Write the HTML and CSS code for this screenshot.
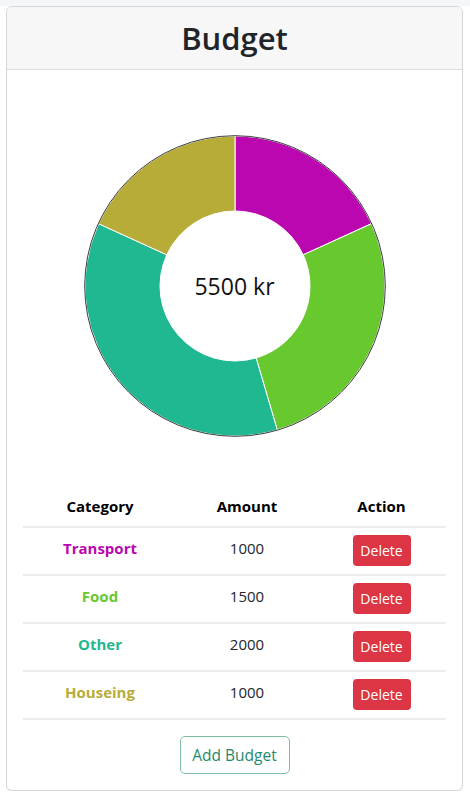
FILE: index.html
```html
<!DOCTYPE html>
<html lang="en">
<head>
<meta charset="utf-8">
<title>Budget</title>
<link rel="stylesheet" href="styles.css">
</head>
<body>
<div class="topstrip"></div>
<div class="card">
  <div class="card-header">
    <h2 class="title">Budget</h2>
  </div>
  <div class="card-body">
    <div class="chart">
      <svg class="donut" width="302" height="302" viewBox="0 0 302 302">
        <path d="M151 1 A150 150 0 0 1 287.44 88.69 L219.22 119.84 A75 75 0 0 0 151 76 Z" fill="#bb07b0" stroke="#fff" stroke-width="1"/>
        <path d="M287.44 88.69 A150 150 0 0 1 193.26 294.92 L172.13 222.96 A75 75 0 0 0 219.22 119.84 Z" fill="#67c92e" stroke="#fff" stroke-width="1"/>
        <path d="M193.26 294.92 A150 150 0 0 1 14.56 88.69 L82.78 119.84 A75 75 0 0 0 172.13 222.96 Z" fill="#1fb891" stroke="#fff" stroke-width="1"/>
        <path d="M14.56 88.69 A150 150 0 0 1 151 1 L151 76 A75 75 0 0 0 82.78 119.84 Z" fill="#b7ac38" stroke="#fff" stroke-width="1"/>
        <circle cx="151" cy="151" r="150.3" fill="none" stroke="#3a3a3a" stroke-width="1"/>
      </svg>
      <div class="total">5500 kr</div>
    </div>
    <table class="budget-table">
      <thead>
        <tr><th>Category</th><th>Amount</th><th>Action</th></tr>
      </thead>
      <tbody>
        <tr><td class="cat transport">Transport</td><td>1000</td><td><button class="btn-delete">Delete</button></td></tr>
        <tr><td class="cat food">Food</td><td>1500</td><td><button class="btn-delete">Delete</button></td></tr>
        <tr><td class="cat other">Other</td><td>2000</td><td><button class="btn-delete">Delete</button></td></tr>
        <tr><td class="cat housing">Houseing</td><td>1000</td><td><button class="btn-delete">Delete</button></td></tr>
      </tbody>
    </table>
    <div class="actions">
      <button class="btn-add">Add Budget</button>
    </div>
  </div>
</div>
</body>
</html>
```
FILE: styles.css
```css
* { box-sizing: border-box; }
html, body {
  margin: 0;
  padding: 0;
  background: #fff;
  font-family: "Open Sans", "Noto Sans", "Liberation Sans", sans-serif;
  color: #212529;
}
.topstrip {
  height: 6px;
  background: #f5f6f8;
}
.card {
  margin: 0 7px 0 6px;
  border: 1px solid #d6d6d6;
  border-radius: 6px;
  box-shadow: 0 1px 1px rgba(0,0,0,0.08);
  overflow: hidden;
}
.card-header {
  background: #f7f7f7;
  border-bottom: 1px solid #dcdcdc;
  height: 63px;
  display: flex;
  align-items: center;
  justify-content: center;
}
.title {
  margin: 0;
  font-size: 31px;
  font-weight: 600;
  line-height: 38px;
  color: #212529;
}
.card-body {
  padding: 16px;
}
.chart {
  height: 400px;
  position: relative;
  display: flex;
  align-items: center;
  justify-content: center;
}
.donut { display: block; }
.total {
  position: absolute;
  left: 0;
  right: 0;
  top: 50%;
  transform: translateY(-50%);
  text-align: center;
  font-size: 23px;
  color: #111;
}
.budget-table {
  width: 100%;
  border-collapse: collapse;
  font-size: 15px;
  line-height: 24px;
}
.budget-table th {
  padding: 8px 8px 8px;
  font-weight: 700;
  color: #000;
  text-align: center;
  border-bottom: 2px solid #ececec;
}
.budget-table th:nth-child(1) { width: 154px; }
.budget-table th:nth-child(2) { width: 140px; }
.budget-table td {
  padding: 8px 8px 7px;
  height: 48px;
  vertical-align: top;
  text-align: center;
  border-bottom: 2px solid #ececec;
  color: #212529;
}
.budget-table .cat { font-weight: 700; }
.budget-table .transport { color: #bb07b0; }
.budget-table .food { color: #67c92e; }
.budget-table .other { color: #1fb891; }
.budget-table .housing { color: #b7ac38; }
.btn-delete {
  display: block;
  margin: -1px auto 0;
  font-family: inherit;
  font-size: 14px;
  height: 31px;
  width: 58px;
  padding: 0;
  border: none;
  border-radius: 4px;
  background: #dc3545;
  color: #fff;
}
.actions {
  display: flex;
  justify-content: center;
  margin-top: 16px;
}
.btn-add {
  font-family: inherit;
  font-size: 15.5px;
  height: 38px;
  width: 110px;
  padding: 0;
  background: #fff;
  border: 1px solid #7fbf9f;
  border-radius: 5px;
  color: #1f8a70;
}
```
